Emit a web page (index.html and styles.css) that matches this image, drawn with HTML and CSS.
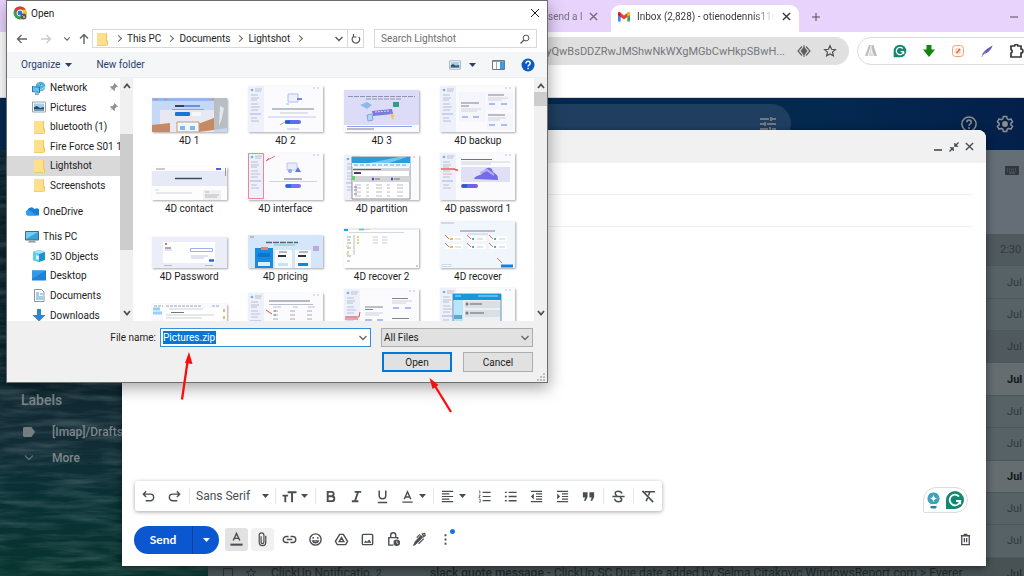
FILE: index.html
```html
<!DOCTYPE html>
<html lang="en">
<head>
<meta charset="utf-8">
<title>Inbox</title>
<link rel="stylesheet" href="styles.css">
</head>
<body>
<svg class="defs" aria-hidden="true">
  <defs>
    <symbol id="folder" viewBox="0 0 14 14"><path d="M2 1h9v9h1v4H2z" fill="#ffe08a"/><path d="M11 1v9h1v4l1-1V9l-1-1V1z" fill="#f3c64f"/><path d="M2 13h9v1H2z" fill="#f0cd6b"/></symbol>
    <symbol id="pin" viewBox="0 0 10 10"><path d="M6 0l4 4-1 .5-.5-.2-2 2v2L5.700 9 3.500 6.800 0 10 3.200 6.500 1 4.300l.7-.8h2l2-2L5.500 1z" fill="#8c949c"/></symbol>
    <symbol id="x" viewBox="0 0 10 10"><path d="M1 1l8 8M9 1L1 9" fill="none" stroke="currentColor"/></symbol>
    <symbol id="caret" viewBox="0 0 8 8"><path d="M1 2h7L4.500 6z" fill="currentColor"/></symbol>
    <symbol id="down" viewBox="0 0 10 10"><path d="M1.500 3L5 6.500 8.500 3" fill="none" stroke="currentColor" stroke-width="1.300"/></symbol>
    <symbol id="up" viewBox="0 0 10 10"><path d="M2 7l3-3.500L8 7" fill="none" stroke="currentColor" stroke-width="1.800"/></symbol>
    <symbol id="dn" viewBox="0 0 10 10"><path d="M2 3l3 3.500L8 3" fill="none" stroke="currentColor" stroke-width="1.800"/></symbol>
    <symbol id="picture" viewBox="0 0 14 12"><path d="M.5 1h13v10H.5z" fill="#fff" stroke="#9aa4ad"/><path d="M2 2.500h10v7H2z" fill="#9fd0ef"/><path d="M2 6l3-1 3 2 4-1v3.500H2z" fill="#2c4a63"/><path d="M2 8h10v1.500H2z" fill="#6b96b5"/></symbol>
    <symbol id="side" viewBox="0 0 75 47"><path d="M0 0h75v47H0z" fill="#fbfbfe"/><path d="M0 0h16v47H0z" fill="#eef0fb"/><circle cx="4" cy="4" r="1.300" fill="#6fb3ec"/><path d="M7 3h7M7 5h6M3 9h7M3 12h8M3 14h6M3 18h7M3 21h9M3 24h7M3 32h6M3 35h8" stroke="#b4bacb" stroke-width=".9"/><path d="M2 28h11" stroke="#9db1f5"/><path d="M65 2h2M69 2h2" stroke="#b9bfd6"/></symbol>
    <symbol id="gram" viewBox="0 0 20 20"><path d="M10 1a9 9 0 1 1 0 18H1v-9a9 9 0 0 1 9-9z" fill="#15866f"/><path d="M14 6.500A5.300 5.300 0 1 0 15.200 11H11m4.200 0v3.200" fill="none" stroke="#fff" stroke-width="1.800"/></symbol>
  </defs>
</svg>

<div class="browser">
  <nav class="tabs" aria-label="Browser tabs">
    <div class="tab old"><span class="fade">send a l</span><button aria-label="Close tab"><svg class="bold" width="9" height="9"><use href="#x"/></svg></button></div>
    <div class="tab active">
      <svg width="12" height="10" viewBox="0 0 12 10"><path d="M0 1.500V9.500h2.700V4z" fill="#4285f4"/><path d="M12 1.500V9.500H9.300V4z" fill="#34a853"/><path d="M0 1.500C0 .3 1.300-.2 2.200.5L6 3.500 9.800.5C10.700-.2 12 .3 12 1.500V3L6 7.500 0 3z" fill="#ea4335"/><path d="M0 1.500C0 .5 1.500-.2 2.700 1v4L0 3z" fill="#c5221f"/><path d="M12 1.500C12 .5 10.500-.2 9.300 1v4L12 3z" fill="#fbbc04"/></svg>
      <span class="fade">Inbox (2,828) - otienodennis116</span>
      <button aria-label="Close tab"><svg class="bold" width="9" height="9"><use href="#x"/></svg></button>
    </div>
    <button class="plus" aria-label="New tab"><svg width="10" height="10" viewBox="0 0 10 10"><path d="M5 1v8M1 5h8" stroke="currentColor"/></svg></button>
    <button class="min" aria-label="Minimize"><svg width="10" height="10" viewBox="0 0 10 10"><path d="M1 5h8" stroke="currentColor"/></svg></button>
  </nav>
  <div class="toolbar">
    <div class="url"><span>yQwBsDDZRwJMShwNkWXgMGbCwHkpSBwH...</span>
      <svg width="14" height="12" viewBox="0 0 14 12"><path d="M5 1.500L1 6l4 4.500M9 1.500L13 6l-4 4.500" fill="none" stroke="#5c5f63" stroke-width="1.200"/><path d="M7 1.500L10.500 6 7 10.500 3.500 6z" fill="#5c5f63"/><path d="M7 0v12" stroke="#5c5f63"/></svg>
      <svg width="14" height="14" viewBox="0 0 24 24"><path d="M12 3l2.700 6 6.500.6-4.900 4.300 1.500 6.400L12 17l-5.800 3.300 1.500-6.400-4.900-4.300L9.300 9z" fill="none" stroke="#4a4d51" stroke-width="2"/></svg>
    </div>
    <div class="exts">
      <svg width="14" height="14" viewBox="0 0 14 14"><path d="M5 1h2L3.500 12H1zM7.500 1h2L13 12h-3L7.500 5z" fill="#bdbdbd"/><path d="M7 1v11H4.500zM8 5l1 7H7z" fill="#dcdcdc"/></svg>
      <svg width="14" height="14"><use href="#gram"/></svg>
      <svg width="14" height="14" viewBox="0 0 14 14"><path d="M4.500 1h5v4.500H13L7 13 1 5.500h3.500z" fill="#12850f"/></svg>
      <svg width="14" height="14" viewBox="0 0 14 14"><rect x="1.500" y="1.500" width="11" height="11" rx="3" fill="#fff8f2" stroke="#eda57f"/><path d="M5 5h4v4H5z" fill="none" stroke="#f3bf92"/><path d="M5.500 9L9 5" stroke="#e4565a" stroke-width="1.300"/></svg>
      <svg width="14" height="14" viewBox="0 0 14 14"><path d="M2 12C2 8 8 4 12.500 1.500 12 5 7 10 3.500 10z" fill="#6558b7"/><path d="M1.500 13l4-5" stroke="#a79be5"/></svg>
      <svg width="16" height="14" viewBox="0 0 16 14"><path d="M2 2h3.500c0-2 3.500-2 3.500 0h3v3c2.500 0 2.500 4 0 4v4H2V9c1.500 0 1.500-3.500 0-3.500z" fill="none" stroke="#35373a" stroke-width="1.700"/></svg>
    </div>
  </div>

  <main class="mail">
    <svg class="waves" aria-hidden="true"><filter id="w" x="0" y="0" width="100%" height="100%"><feTurbulence type="fractalNoise" baseFrequency=".018 .13" numOctaves="4" seed="7"/><feColorMatrix values="0 0 0 0 .45  0 0 0 0 .55  0 0 0 0 .6  1.600 0 0 0 -.62"/></filter><rect width="100%" height="100%" filter="url(#w)"/></svg>
    <header class="mailhead">
      <div class="search"><svg width="16" height="16" viewBox="0 0 16 16"><path d="M0 3h9M12 3h4M11 1v4M0 8h4M7 8h9M5 6v4M0 13h8M12 13h4M10 11v4" stroke="#8b8f88" stroke-width="1.500"/></svg></div>
      <div class="headicons">
        <svg width="18" height="18" viewBox="0 0 24 24" fill="none" stroke="#8b8f90" stroke-width="2"><circle cx="12" cy="12" r="9.500"/><path d="M9 9.500c0-4 6-4 6 0 0 2.500-3 2.500-3 5M12 16v2.500"/></svg>
        <svg width="20" height="20" viewBox="0 0 24 24" fill="none" stroke="#8b8f90" stroke-width="1.800"><path d="M10 3h4l.6 2.800 1.800 1 2.700-.9 2 3.400-2.100 1.900v1.800l2.100 1.800-2 3.400-2.700-.9-1.800 1L14 21h-4l-.6-2.700-1.800-1-2.700.9-2-3.400L5 13V11.200L2.900 9.300l2-3.400 2.700.9 1.800-1z"/><circle cx="12" cy="12" r="2.600" fill="#8b8f90"/></svg>
      </div>
    </header>
    <div class="mailbody">
      <aside class="labels">
        <h2>Labels</h2>
        <a href="#drafts"><svg width="12" height="10" viewBox="0 0 12 10"><path d="M1 0h7.500L12 5l-3.500 5H1L0 9V1z" fill="#747e80"/></svg>[Imap]/Drafts</a>
        <a href="#more"><svg width="12" height="10" viewBox="0 0 12 10"><path d="M2 2.500l4 4 4-4" fill="none" stroke="#5f6b6e" stroke-width="1.300"/></svg>More</a>
      </aside>
      <section class="list">
        <div class="listtop"><svg width="14" height="9" viewBox="0 0 14 9"><rect width="14" height="9" rx="1" fill="#30383c"/><path d="M2 3h10M2 5h10" stroke="#59636a" stroke-dasharray="1 1"/><path d="M4 7h6" stroke="#59636a"/></svg></div>
        <ul>
          <li class="read"><time class="wide">2:30 PM</time></li><li><time>Jul</time></li><li><time>Jul</time></li><li class="read"><time>Jul</time></li><li class="unread"><time>Jul</time></li><li><time>Jul</time></li><li><time>Jul</time></li><li class="unread"><time>Jul</time></li><li><time>Jul</time></li><li><time>Jul</time></li>
          <li class="full"><svg width="10" height="10" viewBox="0 0 10 10"><path d="M.5.5h9v9h-9z" fill="none" stroke="#293236"/></svg><svg width="12" height="12" viewBox="0 0 24 24"><path d="M12 3l2.700 6 6.500.6-4.900 4.300 1.500 6.400L12 17l-5.800 3.300 1.500-6.400-4.900-4.300L9.300 9z" fill="none" stroke="#293236" stroke-width="2"/></svg><span class="from">ClickUp Notificatio. <small>2</small></span><span class="subj">slack quote message - <i>ClickUp SC Due date added by Selma Citakovic WindowsReport.com &gt; Everer</i></span><time>Jul</time></li>
        </ul>
      </section>
    </div>
  </main>
</div>

<section class="compose" aria-label="New message">
  <header>
    <button aria-label="Minimize"><svg width="10" height="10" viewBox="0 0 10 10"><path d="M1 8h8" stroke="currentColor" stroke-width="1.600"/></svg></button>
    <button aria-label="Exit full screen"><svg width="10" height="10" viewBox="0 0 10 10"><path d="M.5 9.500L3.500 6.500M9.500.5L6.500 3.500" stroke="currentColor" stroke-width="1.400"/><path d="M1 5.500h3.500V9zM9 4.500H5.500V1z" fill="currentColor" stroke="currentColor" stroke-width=".6"/></svg></button>
    <button aria-label="Close"><svg class="bold" width="9" height="9"><use href="#x"/></svg></button>
  </header>
  <div class="field"></div>
  <div class="field"></div>
  <div class="content">
    <div class="assist"><svg width="13" height="17" viewBox="0 0 13 17"><path d="M6.500.5a6 6 0 0 1 3 11.200V13h-6v-1.300a6 6 0 0 1 3-11.200z" fill="#3ea4b9"/><path d="M6.500 3l1 2.500 2.500 1-2.500 1-1 2.500-1-2.500-2.500-1 2.500-1z" fill="#fff"/><path d="M3.500 12.500h6" stroke="#fff"/><path d="M3.500 14h6v1.500l-1 1h-4l-1-1z" fill="#278795"/></svg><svg width="20" height="20"><use href="#gram"/></svg></div>
  </div>
  <div class="format" role="toolbar" aria-label="Formatting">
    <button aria-label="Undo"><svg viewBox="0 0 16 16"><path d="M3 5.500h7a3.500 3.500 0 0 1 0 7H5M5.500 2.500l-3 3 3 3"/></svg></button>
    <button aria-label="Redo"><svg viewBox="0 0 16 16"><path d="M13 5.500H6a3.500 3.500 0 0 0 0 7h5M10.500 2.500l3 3-3 3"/></svg></button>
    <i></i>
    <button class="font">Sans Serif<svg class="c"><use href="#caret"/></svg></button>
    <i></i>
    <button class="drop" aria-label="Size"><svg viewBox="0 0 16 16"><path d="M6 3.500h9.500M10.700 3.500V14M.5 7h6M3.500 7v7" stroke-width="2"/></svg><svg class="c"><use href="#caret"/></svg></button>
    <i></i>
    <button aria-label="Bold"><svg viewBox="0 0 16 16"><path d="M5 3h4a2.300 2.300 0 0 1 0 4.700H5zM5 7.700h4.500a2.600 2.600 0 0 1 0 5.200H5z" stroke-width="2"/></svg></button>
    <button aria-label="Italic"><svg viewBox="0 0 16 16"><path d="M6 3h7M3 13h7M9.700 3L6.300 13" stroke-width="2"/></svg></button>
    <button aria-label="Underline"><svg viewBox="0 0 16 16"><path d="M4.500 1.500v5.500a3.500 3.500 0 0 0 7 0V1.500M3 14.500h10" stroke-width="1.600"/></svg></button>
    <button class="drop" aria-label="Text colour"><svg viewBox="0 0 16 16"><path d="M4.500 11L8 3l3.500 8M5.500 8.500h5M2.500 14h11"/></svg><svg class="c"><use href="#caret"/></svg></button>
    <i></i>
    <button class="drop" aria-label="Align"><svg viewBox="0 0 16 16"><path d="M2 2.500h12M2 5.200h8M2 8h12M2 10.800h8M2 13.500h12" stroke-width="1.300"/></svg><svg class="c"><use href="#caret"/></svg></button>
    <button aria-label="Numbered list"><svg viewBox="0 0 16 16"><path d="M6 3.500h8.500M6 8h8.500M6 12.500h8.500" stroke-width="1.300"/><path d="M2 2h1v3M2 6.500h1.500L2 9h1.500M2 11h1.500v3H2" stroke-width=".8"/></svg></button>
    <button aria-label="Bulleted list"><svg viewBox="0 0 16 16"><path d="M6 3.500h8.500M6 8h8.500M6 12.500h8.500M2 3.500h2M2 8h2M2 12.500h2" stroke-width="1.400"/></svg></button>
    <button aria-label="Indent less"><svg viewBox="0 0 16 16"><path d="M2 2.500h12M7.500 5.200H14M7.500 8H14M7.500 10.800H14M2 13.500h12M4.500 6.500v3L3 8z" stroke-width="1.300"/></svg></button>
    <button aria-label="Indent more"><svg viewBox="0 0 16 16"><path d="M2 2.500h12M7.500 5.200H14M7.500 8H14M7.500 10.800H14M2 13.500h12M3 6.500v3L4.500 8z" stroke-width="1.300"/></svg></button>
    <button aria-label="Quote"><svg viewBox="0 0 16 16"><path d="M2 3.500h5v5L5 12.500H3L4.500 9H2zM9 3.500h5v5l-2 4h-2L11.500 9H9z" fill="currentColor" stroke="none"/></svg></button>
    <i></i>
    <button aria-label="Strikethrough"><svg viewBox="0 0 16 16"><path d="M1.500 8h13M11.500 5c-.5-3.500-7-3.500-7-.3 0 1.300 1 2 2 2.300M9.500 9c3 1.300 2.500 4.500-1.500 4.500-2.500 0-4-1.300-4-3" stroke-width="1.600"/></svg></button>
    <i></i>
    <button aria-label="Remove formatting"><svg viewBox="0 0 16 16"><path d="M4 3h11M9.500 3L8 7M7 9.500L5.500 13M1.500 2L13 14" stroke-width="1.700"/></svg></button>
  </div>
  <footer>
    <div class="send"><button>Send</button><button aria-label="More send options"><svg class="c"><use href="#caret"/></svg></button></div>
    <button class="on" aria-label="Formatting options"><svg viewBox="0 0 16 16"><path d="M4.500 9L8 1.500 11.500 9M5.500 6.800h5"/><path d="M1.500 13.500h13" stroke-width="2.200"/></svg></button>
    <button class="tint" aria-label="Attach files"><svg viewBox="0 0 16 16"><path d="M11.500 4v7a3.500 3.500 0 0 1-7 0V3.500a2.500 2.500 0 0 1 5 0V11a1.500 1.500 0 0 1-3 0V4.500" stroke-width="1.300"/></svg></button>
    <button aria-label="Insert link"><svg viewBox="0 0 16 16"><path d="M7 4.800H4.500a3.200 3.200 0 0 0 0 6.400H7M9 4.800h2.500a3.200 3.200 0 0 1 0 6.400H9M5 8h6"/></svg></button>
    <button aria-label="Insert emoji"><svg viewBox="0 0 16 16"><circle cx="8" cy="8" r="6"/><path d="M5.500 5.300v2M10.500 5.300v2M5 9.500c1 2.600 5 2.600 6 0z"/></svg></button>
    <button aria-label="Insert from Drive"><svg viewBox="0 0 16 16"><path d="M6 2.500h4l4.500 7.500-2 3.500h-9l-2-3.500zM8 6l2.500 4.300h-5z"/></svg></button>
    <button aria-label="Insert photo"><svg viewBox="0 0 16 16"><rect x="2.500" y="2.500" width="11" height="11" rx="1"/><path d="M4 11.500l2-2.500 1.500 1.500L10 8l2 3.500z" fill="currentColor" stroke="none"/></svg></button>
    <button aria-label="Confidential mode"><svg viewBox="0 0 16 16"><path d="M8 14H3V6h9.500v1.500M5 6V3.500a2.700 2.700 0 0 1 5.400 0V6"/><circle cx="11.500" cy="11.500" r="3.500" fill="currentColor" stroke="none"/><path d="M11.500 9.500v2.200l1.500.8" stroke="#fff" stroke-width=".8"/></svg></button>
    <button aria-label="Insert signature"><svg viewBox="0 0 16 16"><path d="M1.500 14.500l2-1 8-8-2-2-6 6.500z" fill="currentColor" stroke-width=".8"/><path d="M11 2l2.500-.5.5 2-1.500 1.500zM8.500 2.500L5 6M12.500 7L7 12.500" stroke-width="1.300"/></svg></button>
    <button class="more" aria-label="More options"><svg viewBox="0 0 16 16"><path d="M8 2.500v2M8 7v2M8 11.500v2" stroke-width="2"/></svg></button>
    <button class="trash" aria-label="Discard draft"><svg viewBox="0 0 16 16"><path d="M3 4h10M6 2.500h4M4 4v9.500h8V4M6.800 6.500V11M9.200 6.500V11" stroke-width="1.400"/></svg></button>
  </footer>
</section>

<section class="dialog" role="dialog" aria-label="Open">
  <header>
    <svg width="14" height="14" viewBox="0 0 14 14"><circle cx="7" cy="7" r="6.500" fill="#2fa34f"/><path d="M7 .5a6.500 6.500 0 0 1 5.700 3.300H7L4.200 8.600 1.400 3.700A6.500 6.500 0 0 1 7 .5z" fill="#e33b2e"/><path d="M12.700 3.800a6.500 6.500 0 0 1-5.400 9.700L10 7 7 3.800z" fill="#fbc116"/><circle cx="7" cy="7" r="3" fill="#2a77d9" stroke="#fff"/><circle cx="10.500" cy="10.500" r="3" fill="#5a5552"/><path d="M9 9l3 3M12 10l-2 2" stroke="#c9b9a8" stroke-width=".8"/></svg>
    <h1>Open</h1>
    <button aria-label="Close"><svg width="10" height="10"><use href="#x"/></svg></button>
  </header>
  <nav class="path" aria-label="Location">
    <button aria-label="Back"><svg width="12" height="12" viewBox="0 0 12 12"><path d="M11 6H1.500M5.500 2l-4 4 4 4" fill="none" stroke="#5f6368" stroke-width="1.300"/></svg></button>
    <button aria-label="Forward"><svg width="12" height="12" viewBox="0 0 12 12"><path d="M1 6h9.500M6.500 2l4 4-4 4" fill="none" stroke="#c9cbcd" stroke-width="1.300"/></svg></button>
    <button class="slim" aria-label="Recent"><svg width="8" height="8"><use href="#down"/></svg></button>
    <button class="slim" aria-label="Up"><svg width="12" height="12" viewBox="0 0 12 12"><path d="M6 11V1.500M2 5.500l4-4 4 4" fill="none" stroke="#5f6368" stroke-width="1.400"/></svg></button>
    <div class="crumbs"><svg width="14" height="14"><use href="#folder"/></svg><b></b><a href="#pc">This PC</a><b></b><a href="#docs">Documents</a><b></b><a href="#shot">Lightshot</a><b></b>
      <button aria-label="Previous locations"><svg width="10" height="10"><use href="#down"/></svg></button><button class="refresh" aria-label="Refresh"><svg width="10" height="10" viewBox="0 0 10 10"><path d="M7.800 2.800A3.800 3.800 0 1 1 3 2M2.500 0v3h3" fill="none" stroke="#555" stroke-width="1.200"/></svg></button></div>
    <label class="find"><input type="text" placeholder="Search Lightshot" aria-label="Search Lightshot"><svg width="10" height="10" viewBox="0 0 10 10"><circle cx="6" cy="4" r="2.900" fill="none" stroke="#555"/><path d="M4 6L.5 9.500" stroke="#555" stroke-width="1.300"/></svg></label>
  </nav>
  <div class="commands">
    <button>Organize<svg width="8" height="8"><use href="#caret"/></svg></button>
    <button>New folder</button>
    <div class="views">
      <button aria-label="View"><svg width="12" height="10"><use href="#picture"/></svg><svg width="8" height="8"><use href="#caret"/></svg></button>
      <button aria-label="Preview pane"><svg width="13" height="10" viewBox="0 0 13 10"><path d="M.5.5h12v9H.5z" fill="#fff" stroke="#6c7a85"/><path d="M1 1.500h11" stroke="#8aa0b0"/><path d="M4.500 1v8" stroke="#9aa"/><path d="M8 2h4v7H8z" fill="#3a9be8"/></svg></button>
      <button aria-label="Help"><svg width="14" height="14" viewBox="0 0 14 14"><circle cx="7" cy="7" r="6.500" fill="#0c5bc4"/><path d="M5 5.500c0-3 4.200-2.800 4.200-.2C9.200 7 7.100 7 7.100 8.500M7.100 9.700v1.600" fill="none" stroke="#fff" stroke-width="1.500"/></svg></button>
    </div>
  </div>
  <div class="panes">
    <div class="tree">
      <ul>
        <li><svg width="14" height="14" viewBox="0 0 14 14"><circle cx="8.500" cy="5.500" r="4.800" fill="#4fb2dc"/><path d="M6 1.500c2 1 1 3 4 3M8 9l5-3" stroke="#a9e0f5"/><path d="M0 5l8 1v6l-8-1z" fill="#2676b5"/><path d="M1 6l6 .8V11l-6-.8z" fill="#62c2f1"/><path d="M3 12l4 .5V14H3z" fill="#8aa"/></svg>Network<svg class="pin"><use href="#pin"/></svg></li>
        <li><svg width="14" height="12"><use href="#picture"/></svg>Pictures<svg class="pin"><use href="#pin"/></svg></li>
        <li><svg width="14" height="14"><use href="#folder"/></svg>bluetooth (1)</li>
        <li><svg width="14" height="14"><use href="#folder"/></svg>Fire Force S01 10</li>
        <li class="sel"><svg width="14" height="14"><use href="#folder"/></svg>Lightshot</li>
        <li><svg width="14" height="14"><use href="#folder"/></svg>Screenshots</li>
      </ul>
      <ul class="one"><li><svg width="14" height="10" viewBox="0 0 14 10"><path d="M3 9.500A3 3 0 0 1 2.500 4 4 4 0 0 1 9.500 3a3.300 3.300 0 0 1 4 6.500z" fill="#1580d8"/><path d="M3 9.500A3 3 0 0 1 2.500 4c2 0 3 1 9 5.500z" fill="#2f9cf0"/></svg>OneDrive</li></ul>
      <ul class="pc">
        <li class="root"><svg width="14" height="12" viewBox="0 0 14 12"><path d="M.5.500h13v8.500H.5z" fill="#36a3dc" stroke="#45687d"/><path d="M1 1h12L1 8z" fill="#75cdf0"/><path d="M4 10h6l1 1.500H3z" fill="#8c9aa5"/></svg>This PC</li>
        <li><svg width="14" height="14" viewBox="0 0 14 14"><path d="M1 3l6-2 6 2v8l-6 2-6-2z" fill="#1b94c9"/><path d="M1 3l6 2v8l-6-2z" fill="#61cdee"/><path d="M1 3l6-2 6 2-6 2z" fill="#a3e4f7"/><path d="M4 6l3 1v4L4 10z" fill="#d9f4fb"/></svg>3D Objects</li>
        <li><svg width="14" height="11" viewBox="0 0 14 11"><path d="M0 .5h14v10H0z" fill="#1b82d8"/><path d="M0 .5h14L0 9z" fill="#3499ea"/></svg>Desktop</li>
        <li><svg width="14" height="13" viewBox="0 0 14 13"><path d="M2.500.5h7l2.500 2.500v9.500H2.500z" fill="#fff" stroke="#8b959d"/><path d="M4 4h3M8 5h3M4 6h3M4 8h7M4 10h7" stroke="#4f9bd6"/></svg>Documents</li>
        <li><svg width="14" height="13" viewBox="0 0 14 13"><path d="M5 0h4v6h4.500L7 12.500.5 6H5z" fill="#2a86dd"/></svg>Downloads</li>
      </ul>
    </div>
    <div class="bar left"><svg><use href="#up"/></svg><div class="thumb"></div><svg class="end"><use href="#dn"/></svg></div>
    <div class="files">
      <figure><svg height="34" viewBox="0 0 75 34"><path d="M0 0h75v34H0z" fill="#c5d8f6"/><path d="M8 12h54v22H8z" fill="#e7e8f2"/><path d="M0 0h75v3H0z" fill="#98b6ea"/><path d="M2 1.500h4M60 1.500h5M12 1.500h3" stroke="#ee8967" stroke-width="1.500"/><path d="M0 27l18-2v9H0zM46 26l16-6v12l-16 2z" fill="#c58a65"/><path d="M62 0h13v30l-13 2z" fill="#b9bdc4"/><path d="M68 8l4 2-2 10-3 8z" fill="#e6e7ea"/><path d="M25 24h22v10H25z" fill="#eef8ff" stroke="#c89774"/><path d="M28 28h5v4h-5zM38 28h5v4h-5z" fill="#82b6e7"/><path d="M23 8h9" stroke="#354062" stroke-width="2"/><path d="M32 8h16" stroke="#6c8cf0" stroke-width="2"/><path d="M20 11.500h32" stroke="#9ba4b8"/><rect x="23" y="14" width="15" height="4" rx="1" fill="#1777d2"/><rect x="40" y="14" width="9" height="4" rx="1" fill="#f7f7f9"/></svg><figcaption>4D 1</figcaption></figure>
      <figure><svg height="46" viewBox="0 0 75 46"><use href="#side" width="75" height="47"/><path d="M40 8h10v8H40z" fill="#edf1ff" stroke="#b1bdf0"/><path d="M49 13h5" stroke="#7180ee" stroke-width="2"/><path d="M38 18h3" stroke="#77d9c9"/><path d="M24 23h42" stroke="#7d8498"/><path d="M32 27h28" stroke="#c4c8d2"/><path d="M20 31h48" stroke="#bcc8f9"/><path d="M32 39l5-3" stroke="#ef8c87"/><rect x="37" y="34" width="16" height="4" rx="2" fill="#626bf0"/><path d="M37 36h5" stroke="#1267cd" stroke-width="3"/><path d="M39 43h12" stroke="#b7c3f7"/></svg><figcaption>4D 2</figcaption></figure>
      <figure><svg height="42" viewBox="0 0 75 42"><path d="M0 0h75v42H0z" fill="#dcdcf8"/><path d="M4 6.500h67M22 9h35" stroke="#8e93b0" stroke-dasharray="5 1"/><path d="M16 15l7-3 5 3-5 4z" fill="#91b8ea"/><path d="M49 12h6v5h-6z" fill="#2c9e8a"/><path d="M28 21l20-2 1 5-20 2z" fill="#7a79dc"/><path d="M31 22l14-1" stroke="#dcd9ff" stroke-dasharray="2 1"/><path d="M23 25l5-1 1 6-5 1z" fill="#b3d4f3" stroke="#82a8dc"/><path d="M46 23l5 3-2 1 1 3-2-1z" fill="#f4c257"/><path d="M0 35h75v7H0z" fill="#fafaff"/><path d="M3 36.500h65" stroke="#8ca3f0"/><path d="M3 39h27" stroke="#777f94"/></svg><figcaption>4D 3</figcaption></figure>
      <figure><svg height="46" viewBox="0 0 75 46"><use href="#side" width="75" height="47"/><path d="M19 6h27v30H19zM47 6h26v18H47zM47 27h26v17H47z" fill="#f5f6fb"/><path d="M21 17h18M21 20h8M48 9h16M48 29h17" stroke="#7d8291"/><path d="M21 23h20M21 25h16M48 12h20M48 14h14M48 32h18M48 34h12" stroke="#d0d3dc"/><path d="M22 31h6M33 31h6M49 18h6M61 18h6M49 39h6M61 39h6" stroke="#99a9ee" stroke-width="1.500"/></svg><figcaption>4D backup</figcaption></figure>

      <figure><svg height="33" viewBox="0 0 75 33"><path d="M0 0h75v33H0z" fill="#fdfdfe"/><path d="M0 4h75v15H0z" fill="#e6eaf6"/><path d="M4 2h9" stroke="#999"/><path d="M64 2h5" stroke="#5161e1" stroke-width="2"/><path d="M23 11.500h27" stroke="#424a62" stroke-width="1.500"/><path d="M3 23h4M4 26h36" stroke="#d2d4db"/><path d="M51 23h18v10H51z" fill="#f0f0f3"/><path d="M53 25h4M53 28h14M53 30h12" stroke="#b6b9c2"/><path d="M73.500 1v8" stroke="#999"/></svg><figcaption>4D contact</figcaption></figure>
      <figure><svg height="47" viewBox="0 0 75 47"><use href="#side" width="75" height="47"/><path d="M.5.500h15v45H.5z" fill="none" stroke="#e88a88"/><path d="M18 8l9-5M18 8l3-3" stroke="#e07672"/><path d="M39 10h10v7H39z" fill="#e7ebfb" stroke="#bdc8ee"/><circle cx="42" cy="18" r="2" fill="#8ea6ed"/><path d="M47 19l3-5 3 5z" fill="#6075de"/><path d="M36 26h18" stroke="#60667b"/><path d="M21 28.500h48" stroke="#d2d4dc"/><rect x="37" y="31" width="16" height="4" rx="2" fill="#7771f2"/><path d="M38 33h5" stroke="#1770d1" stroke-width="3"/></svg><figcaption>4D interface</figcaption></figure>
      <figure><svg height="45" viewBox="0 0 75 45"><use href="#side" width="75" height="47"/><path d="M8 2h58v42H8z" fill="#fff" stroke="#86929c"/><path d="M8 2h58v6H8z" fill="#2a9ddd"/><path d="M25 8L55 2h8L45 8z" fill="#73c8ed"/><path d="M8 8h58v4H8z" fill="#e7f4fb"/><path d="M10 10h54" stroke="#6fa9d0" stroke-dasharray="4 2"/><path d="M8 13h58v3H8zM8 21h58v6H8z" fill="#d4d5d8"/><path d="M9 14.500h28" stroke="#666"/><path d="M10 18h7" stroke="#50396e" stroke-width="2"/><path d="M8 23h3" stroke="#5cd470" stroke-width="4"/><path d="M28 24h2M47 24h2" stroke="#513fc7" stroke-width="2.500"/><path d="M31 24h5M50 24h6" stroke="#70757d"/><path d="M11 30h48M11 33h50M11 37h48M11 41h50" stroke="#b9bdc1" stroke-dasharray="6 5 3 7"/><path d="M10 32h3M10 35h3M10 39h3" stroke="#8154b7"/></svg><figcaption>4D partition</figcaption></figure>
      <figure><svg height="47" viewBox="0 0 75 47"><use href="#side" width="75" height="47"/><path d="M1 16h13l4 1.500" fill="none" stroke="#ef5b51" stroke-width="1.700"/><path d="M21 6.500h31" stroke="#6f7486"/><path d="M21 9h49M21 11h30" stroke="#ced2dc"/><path d="M21 14h49v15H21z" fill="#dfe0f6"/><path d="M34 26c2-5 7-2 9-7 4-6 9-5 10 0 4 3 5 3 5 8z" fill="#756be5"/><path d="M40 20l7-3 7 5" fill="none" stroke="#b5b2f7" stroke-width="2"/><rect x="21" y="31" width="17" height="4" rx="2" fill="#725feb"/><path d="M22 33h5" stroke="#1764c3" stroke-width="3"/></svg><figcaption>4D password 1</figcaption></figure>

      <figure><svg height="31" viewBox="0 0 75 31"><path d="M0 0h75v31H0z" fill="#ebeef8"/><path d="M11 5h52v21H11z" fill="#fff"/><path d="M13 7h2" stroke="#d97d68" stroke-width="2"/><path d="M13 11h6" stroke="#4c5367"/><path d="M13 13h7M39 19h17M39 21h13" stroke="#c1c8df"/><path d="M38.500 11.500h22v3h-22z" fill="#fff" stroke="#9bb3f4"/><path d="M57 23.500h5" stroke="#2868df" stroke-width="2.500"/><path d="M12 28.500h8M53 28.500h8" stroke="#b4bac7"/></svg><figcaption>4D Password</figcaption></figure>
      <figure><svg height="33" viewBox="0 0 75 33"><path d="M0 0h75v33H0z" fill="#d4e7fa"/><path d="M2 2h4" stroke="#c48160"/><path d="M18 7.500h32" stroke="#56617a" stroke-width="1.500" stroke-dasharray="6 1"/><path d="M26 10h21" stroke="#7bcbb5"/><path d="M7 13h18v20H7z" fill="#168be0"/><path d="M13 12h7v3h-7z" fill="#ef825e"/><path d="M10 18h12v4H10z" fill="#0d74c9"/><path d="M10 27h12v4H10z" fill="#d9f1ff"/><path d="M27 15h17v18H27zM47 15h16v18H47z" fill="#f9fbff"/><path d="M31 17h8M51 17h9" stroke="#727784"/><path d="M30 21h8M50 21h8" stroke="#30343f" stroke-width="2"/><path d="M30 29.500h10" stroke="#c4e2ff" stroke-width="3"/><path d="M50 29.500h10" stroke="#1683de" stroke-width="3"/><path d="M65 11h6v5h-6z" fill="#bda8d9"/></svg><figcaption>4D pricing</figcaption></figure>
      <figure><svg height="40" viewBox="0 0 75 40"><path d="M0 0h75v40H0z" fill="#fefefe"/><path d="M0 1h75" stroke="#d7dde1"/><path d="M0 2h4" stroke="#1ba1e4" stroke-width="2"/><path d="M15 1.500h5" stroke="#65cf5b" stroke-width="1.500"/><path d="M20 1.500h6" stroke="#e3dc75"/><path d="M5 4.500h55" stroke="#d6d9dc"/><path d="M3 9h4M3 12h3M3 15h4M3 20h4M3 24h2M3 28h4M3 33h3" stroke="#93aabb"/><path d="M2 18h3M2 26h3" stroke="#edc650"/><path d="M10 7v20" stroke="#bbb"/><path d="M13 9h2M13 12h2M13 15h2" stroke="#e6bd54" stroke-width="1.500"/><path d="M29 9h5M38 9h5M29 12h5M38 12h5M29 15h5M38 15h5" stroke="#ccc"/><path d="M72 38h2" stroke="#54afe0"/></svg><figcaption>4D recover 2</figcaption></figure>
      <figure><svg height="47" viewBox="0 0 75 47"><path d="M0 0h75v47H0z" fill="#f1f5fc"/><path d="M1 2h13" stroke="#bbb"/><path d="M20 10h35" stroke="#7b8396"/><path d="M28 13h20" stroke="#c8ced9"/><path d="M5 15h18v5H5zM28 15h18v5H28zM49 15h18v5H49zM5 23h18v5H5zM28 23h18v5H28zM49 23h18v5H49z" fill="#fff"/><path d="M5 14l4 4M27 14l4 4M49 14l4 4M5 22l4 4M27 22l4 4M49 22l4 4M57 37l5 5" stroke="#e36a64"/><path d="M10 18h3M10 26h3" stroke="#f6b934" stroke-width="2"/><path d="M32 18h2M54 18h2M32 26h2M54 26h2" stroke="#37b7d9" stroke-width="2"/><path d="M15 18h6M37 18h6M59 18h6M15 26h6M37 26h6M59 26h6" stroke="#c8cbd1"/><path d="M61 45h12" stroke="#1580dd" stroke-width="3"/><path d="M2 43.500h9v2H2z" fill="#fff" stroke="#9bc1e0" stroke-width=".5"/></svg><figcaption>4D recover</figcaption></figure>

      <figure><svg height="32" viewBox="0 0 75 32"><path d="M0 0h75v32H0z" fill="#f7f9fd"/><path d="M11 4h59v28H11z" fill="#fff"/><path d="M2 2h9M14 2h36M60 2h8" stroke="#9ea8b6" stroke-dasharray="3 1"/><path d="M1 5h7M1 9h9" stroke="#98cffb" stroke-width="3"/><path d="M17 5h34M14 11h48M14 14h36" stroke="#ccd1d8"/><path d="M19 8.500h13" stroke="#777"/><path d="M72 5v3M72 12v3" stroke="#e6c15b" stroke-width="2"/></svg><figcaption>4D sheet</figcaption></figure>
      <figure><svg height="43" viewBox="0 0 75 43"><use href="#side" width="75" height="47"/><path d="M21 8h41" stroke="#6f7586"/><path d="M21 11.500h44M25 14h8M45 14h5M60 14h7" stroke="#b9bfca"/><path d="M18 17l6 4" stroke="#da4d49"/><path d="M25 18h48M25 22h48M25 26h48M25 30h48" stroke="#a6abb7" stroke-dasharray="5 12"/><path d="M26 18h2M26 22h2" stroke="#6f79e0"/></svg><figcaption>4D system</figcaption></figure>
      <figure><svg height="47" viewBox="0 0 75 47"><use href="#side" width="75" height="47"/><path d="M21 18h18M21 20.500h8M48 9.500h16M48 29.500h17" stroke="#7d8291"/><path d="M21 24h18M21 26h14M48 12h20M48 14h14" stroke="#ccd1d9"/><path d="M21 31h7M33 31h6M49 19h6M61 19h6" stroke="#94a6f2" stroke-width="1.500"/><path d="M1 28h14l1-5M1 30h13" fill="none" stroke="#e35953"/></svg><figcaption>4D tools</figcaption></figure>
      <figure><svg height="48" viewBox="0 0 75 48"><use href="#side" width="75" height="47"/><path d="M13 6h48v42H13z" fill="#edf0f3" stroke="#5a92b7"/><path d="M13 6h48v6H13z" fill="#1599db"/><path d="M15 8h6M38 8h20" stroke="#a3e2ff"/><path d="M14 12h9v36h-9z" fill="#b7e5fa"/><path d="M25 13h35v7H25zM25 22h35v7H25z" fill="#dadfe4"/><circle cx="27" cy="16" r="1.500" fill="#6b7d8e"/><circle cx="27" cy="25" r="1.500" fill="#6b7d8e"/><path d="M30 16h12M30 25h14" stroke="#5b626b"/><path d="M14 29h8" stroke="#5ba8cb" stroke-width="4"/></svg><figcaption>4D utility</figcaption></figure>
    </div>
    <div class="bar right"><svg><use href="#up"/></svg><div class="thumb"></div><svg class="end"><use href="#dn"/></svg></div>
  </div>
  <form>
    <label for="fname">File name:</label>
    <div class="combo"><input id="fname" type="text" value="Pictures.zip"><svg width="10" height="10"><use href="#down"/></svg></div>
    <div class="pick"><select aria-label="File type"><option>All Files</option></select><svg width="10" height="10"><use href="#down"/></svg></div>
    <div class="actions"><button type="button" class="primary">Open</button><button type="button">Cancel</button></div>
  </form>
  <svg class="grip" width="8" height="8" viewBox="0 0 8 8"><path d="M6 0h2v2H6zM3 3h2v2H3zM6 3h2v2H6zM0 6h2v2H0zM3 6h2v2H3zM6 6h2v2H6z" fill="#bdbdbd"/></svg>
</section>

<svg class="arrows" width="300" height="80" viewBox="170 340 300 80" aria-hidden="true"><g stroke="#fb0d0d" stroke-width="2.300" fill="#fb0d0d"><path d="M182 399.500L187.500 362"/><path d="M451 412L435 386"/><path d="M189 352l3.500 12-7.500-1zM429.500 378l9 7-6 4z" stroke="none"/></g></svg>
</body>
</html>
```
FILE: styles.css
```css
* { box-sizing: border-box; }
html, body { height: 100%; }
body { margin: 0; overflow: hidden; position: relative; font-family: Roboto, "Noto Sans", sans-serif; font-size: 10px; color: #1d1d1d; }
button { border: 0; padding: 0; background: none; font: inherit; color: inherit; display: flex; align-items: center; justify-content: center; }
a { color: inherit; text-decoration: none; }
ul { margin: 0; padding: 0; list-style: none; }
svg { flex: none; }
.defs { position: absolute; width: 0; height: 0; }
.bold { stroke-width: 1.6; }

/* Browser chrome */
.browser { height: 100%; display: flex; flex-direction: column; background: #fff; }
.tabs { height: 32px; flex: none; background: #e8d3fd; display: flex; align-items: flex-end; padding-left: 540px; color: #4c4c50; }
.tab { height: 27px; display: flex; align-items: center; padding: 0 8px 4px; }
.tab.old { width: 71px; justify-content: space-between; padding-right: 13px; color: #75707d; }
.tab.old .fade { width: 40px; }
.tab.active { width: 188px; gap: 7px; background: #fff; border-radius: 9px 9px 0 0; color: #3a3a3e; padding-left: 7px; }
.tab.active .fade { flex: 1; }
.fade { overflow: hidden; white-space: nowrap; -webkit-mask-image: linear-gradient(90deg, #000 84%, transparent); mask-image: linear-gradient(90deg, #000 84%, transparent); }
.plus { height: 27px; width: 34px; padding-bottom: 4px; }
.min { height: 27px; width: 20px; margin-left: auto; padding-bottom: 4px; }
.toolbar { height: 66px; flex: none; display: flex; gap: 8px; align-items: flex-start; padding: 5px 0 0 6px; border-bottom: 1px solid #d5d8dc; }
.url { flex: 1; height: 28px; display: flex; align-items: center; justify-content: flex-end; gap: 12px; padding-right: 12px; border-radius: 0 14px 14px 0; background: #e0e0e0; font-size: 11px; color: #74777b; }
.exts { width: 182px; height: 28px; margin-right: -15px; border: 1px solid #dedee0; border-radius: 14px; display: flex; align-items: center; gap: 15px; padding-left: 6px; }

/* Mailbox behind the windows */
.mail { flex: 1; min-height: 0; display: flex; flex-direction: column; position: relative; overflow: hidden; background: linear-gradient(180deg, #032650 0, #06212f 60px, #0b2228 150px, #09252d 260px, #142b35 330px, #0a3035 390px, #07342d 100%); }
.waves { position: absolute; left: 0; top: 52px; width: 100%; height: 100%; opacity: .32; }
.mailhead { height: 52px; flex: none; display: flex; justify-content: space-between; background: linear-gradient(90deg, #04294f, #04294f 80%, #03204a); padding: 6px 9px 0 200px; position: relative; }
.search { width: 591px; height: 39px; border-radius: 20px; background: #203f60; display: flex; align-items: center; justify-content: flex-end; padding-right: 15px; }
.headicons { display: flex; gap: 17px; align-items: center; height: 40px; }
.mailbody { flex: 1; min-height: 0; display: flex; position: relative; }
.labels { width: 208px; flex: none; padding: 241px 0 0 21px; color: #7d8789; }
.labels h2 { margin: 0 0 10px; font-size: 14px; line-height: 18px; font-weight: 500; }
.labels a { display: flex; align-items: center; gap: 17px; padding-left: 2px; height: 26px; font-size: 12px; font-weight: 500; }
.list { flex: 1; min-width: 0; display: flex; flex-direction: column; background: rgb(100 108 113 / 93%); }
.listtop { height: 84px; flex: none; display: flex; justify-content: flex-end; padding: 16px 5px 0 0; background: #656e76; }
.list ul { height: 356px; flex: none; display: flex; flex-direction: column; }
.list li { flex: 1; display: flex; align-items: center; justify-content: flex-end; overflow: hidden; border-bottom: 1px solid #4e575b; background: #576266; color: #30383b; font-size: 11px; white-space: nowrap; }
.list li.read { background: #50595d; }
.list li.unread { background: #656d71; color: #14181a; font-weight: 700; }
.list time { width: 17px; margin-left: auto; flex: none; }
.list time.wide { width: 24px; }
.list li.full { gap: 12px; padding-left: 15px; background: #485254; color: #22292b; }
.full .from { width: 147px; flex: none; margin-left: 2px; font-size: 12px; }
.full .subj { font-size: 12px; font-weight: 500; }
.full i { font-style: normal; font-weight: 400; }

/* Compose window */
.compose { position: absolute; left: 122px; right: 38px; top: 130px; bottom: 10px; display: flex; flex-direction: column; background: #fff; border-radius: 8px 8px 0 0; box-shadow: 0 2px 8px rgb(0 0 0 / 50%); color: #494e53; }
.compose header { height: 33px; flex: none; display: flex; justify-content: flex-end; gap: 6px; align-items: center; padding-right: 12px; background: #f1f1f1; border-radius: 8px 8px 0 0; }
.field { height: 32px; flex: none; margin: 0 14px; border-bottom: 1px solid #eeeff0; }
.content { flex: 1; display: flex; align-items: flex-end; justify-content: flex-end; padding: 0 18px; }
.assist { display: flex; align-items: center; justify-content: center; gap: 5px; width: 45px; height: 26px; margin-bottom: -32px; border: 1px solid #dadce0; border-radius: 13px 13px 13px 2px; background: #fff; }
.format { align-self: flex-start; height: 30px; flex: none; display: flex; align-items: center; margin-left: 13px; padding: 0 1px 0 0; border-radius: 3px; box-shadow: 0 1px 4px rgb(0 0 0 / 35%); }
.format i { width: 4px; height: 16px; background: linear-gradient(90deg, transparent 2px, #e6e6e6 2px 3px, transparent 3px); }
.format button, .compose footer > button { width: 26px; height: 26px; }
.format svg, .compose footer svg { width: 15px; height: 15px; fill: none; stroke: currentColor; stroke-width: 1.5; }
.format svg.c, .compose footer svg.c { width: 8px; height: 8px; stroke: none; }
.format .font { width: 82px; justify-content: space-between; padding: 0 4px 0 5px; font-size: 12px; }
.format .drop { width: 36px; gap: 3px; }
.compose footer { display: flex; align-items: center; height: 55px; flex: none; padding: 2px 8px 0 12px; }
.send { display: flex; height: 28px; margin-right: 5px; border-radius: 14px; background: #0b57d0; color: #fff; overflow: hidden; font: 700 12px Lato, sans-serif; }
.send button { width: 58px; }
.send button + button { width: 27px; border-left: 1px solid #0a3f99; }
.compose footer > .on, .compose footer > .tint { width: 23px; height: 23px; margin: 0 2px 0 1px; border-radius: 3px; background: #e2e2e2; }
.compose footer > .tint { background: #f1f1f1; }
.more { position: relative; }
.more::after { content: ""; position: absolute; right: 3px; top: 2px; width: 5px; height: 5px; border-radius: 50%; background: #1a73e8; }
.compose footer > .trash { margin-left: auto; }

/* File chooser */
.dialog { position: absolute; left: 6px; top: 0; width: 542px; display: flex; flex-direction: column; background: #fff; border: 1px solid #6d6d70; box-shadow: 1px 5px 15px rgb(0 0 0 / 35%); }
.dialog header { height: 24px; display: flex; align-items: center; gap: 4px; padding: 0 7px 0 6px; }
.dialog h1 { margin: 0; font-size: 10px; font-weight: 400; }
.dialog header button { margin-left: auto; }
.path { display: flex; align-items: center; height: 27px; padding: 0 10px 0 3px; }
.path > button { width: 24px; color: #666; }
.path > .slim { width: 17px; }
.crumbs { display: flex; align-items: center; width: 272px; height: 19px; margin-right: 10px; padding-left: 2px; border: 1px solid #d9d9d9; white-space: nowrap; }
.crumbs b { width: 18px; display: flex; justify-content: center; }
.crumbs b::before { content: ""; width: 4px; height: 4px; border: solid #666; border-width: 1px 1px 0 0; transform: rotate(45deg); }
.crumbs button { width: 16px; height: 17px; margin-left: auto; color: #555; }
.crumbs .refresh { margin-left: 0; border-left: 1px solid #d9d9d9; }
.find { flex: 1; height: 19px; display: flex; align-items: center; padding: 0 6px; border: 1px solid #d9d9d9; }
.find input { flex: 1; min-width: 0; border: 0; padding: 0; outline: 0; background: none; font: inherit; }
.find input::placeholder { color: #6d6d6d; }
.commands { height: 26px; display: flex; align-items: center; gap: 24px; padding: 0 12px 0 14px; background: #f5f6f8; border-bottom: 1px solid #eceef0; color: #28416b; }
.commands button { gap: 4px; }
.views { display: flex; gap: 16px; margin-left: auto; }
.views button:first-child { gap: 7px; }
.panes { display: flex; height: 243px; overflow: hidden; }
.tree { width: 113px; overflow: hidden; }
.tree ul { height: 117px; display: flex; flex-direction: column; }
.tree ul.one { height: 20px; margin: 6px 0; }
.tree ul.pc { height: 98px; }
.tree li { flex: 1; display: flex; align-items: center; gap: 4px; padding-left: 25px; white-space: nowrap; }
.tree .one li, .tree .root { padding-left: 18px; }
.tree .sel { background: #d9d9d9; }
.pin { width: 9px; height: 9px; margin: 0 2px 0 auto; }
.bar { width: 13px; flex: none; display: flex; flex-direction: column; align-items: center; padding: 2px 0; background: #f0f0f0; color: #505050; }
.bar svg { width: 10px; height: 12px; }
.bar .thumb { width: 13px; height: 14px; background: #cdcdcd; }
.bar.left .thumb { height: 116px; margin-top: 42px; }
.bar .end { margin-top: auto; }
.files { flex: 1; display: grid; grid-template-columns: repeat(4, 1fr); grid-auto-rows: 68px; padding: 4px 8px 0 8px; overflow: hidden; }
.files figure { margin: 0; display: flex; flex-direction: column; align-items: center; justify-content: flex-end; }
.files figure svg { width: 75px; box-shadow: 1px 1px 2px rgb(0 0 0 / 35%); }
.files figcaption { height: 18px; line-height: 18px; white-space: nowrap; }
.dialog form { display: grid; grid-template-columns: 149px 1fr 152px; gap: 5px 0; padding: 7px 14px 10px 0; background: #f0f0f0; align-items: center; }
.dialog form label { text-align: right; }
.combo, .pick { position: relative; height: 19px; display: flex; align-items: center; border: 1px solid #2f8fe0; background: #fff; margin-left: 4px; margin-right: 10px; padding: 0 2px; color: #666; }
.combo input { flex: 1; min-width: 0; border: 0; padding: 0; outline: 0; height: 13px; font: inherit; color: #fff; background: linear-gradient(#0a75d7, #0a75d7) no-repeat 0 0 / 53px 13px; }
.pick { margin: 0; border-color: #adadad; background: #e1e1e1; }
.pick select { flex: 1; appearance: none; border: 0; padding: 0; background: none; font: inherit; color: #1d1d1d; outline: 0; }
.actions { grid-column: 1 / -1; display: flex; justify-content: flex-end; gap: 11px; }
.actions button { width: 70px; height: 20px; border: 1px solid #adadad; background: #e1e1e1; }
.actions .primary { border: 2px solid #0078d7; }
.grip { position: absolute; right: 2px; bottom: 1px; }

.arrows { position: absolute; left: 170px; top: 340px; }
```
